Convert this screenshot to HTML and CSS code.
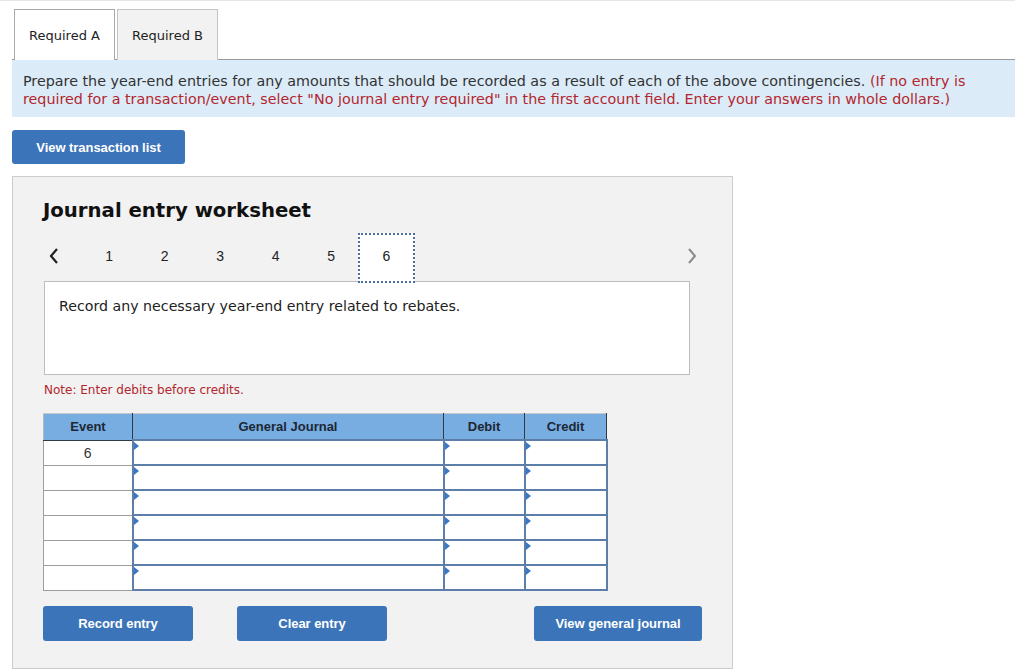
FILE: index.html
```html
<!DOCTYPE html>
<html>
<head>
<meta charset="utf-8">
<link rel="stylesheet" href="styles.css">
</head>
<body>
<div class="page">
  <div class="tabs">
    <div class="tab active">Required A</div>
    <div class="tab">Required B</div>
  </div>
  <div class="instructions">
    Prepare the year-end entries for any amounts that should be recorded as a result of each of the above contingencies. <span class="red">(If no entry is required for a transaction/event, select "No journal entry required" in the first account field. Enter your answers in whole dollars.)</span>
  </div>
  <button class="btn btn-list">View transaction list</button>

  <div class="panel">
    <h2 class="title">Journal entry worksheet</h2>
    <div class="pager">
      <div class="arrow prev">
        <svg width="12" height="18" viewBox="0 0 12 18"><path d="M9 2 L3 9 L9 16" fill="none" stroke="#222" stroke-width="2.2"/></svg>
      </div>
      <div class="num">1</div>
      <div class="num">2</div>
      <div class="num">3</div>
      <div class="num">4</div>
      <div class="num">5</div>
      <div class="num current">6</div>
      <div class="arrow next">
        <svg width="12" height="18" viewBox="0 0 12 18"><path d="M3 2 L9 9 L3 16" fill="none" stroke="#8a8a8a" stroke-width="2"/></svg>
      </div>
    </div>
    <div class="desc">Record any necessary year-end entry related to rebates.</div>
    <div class="note">Note: Enter debits before credits.</div>

    <table class="journal">
      <thead>
        <tr><th class="c-ev">Event</th><th class="c-gj">General Journal</th><th class="c-dr">Debit</th><th class="c-cr">Credit</th></tr>
      </thead>
      <tbody>
        <tr><td class="ev">6</td><td class="in"></td><td class="in"></td><td class="in"></td></tr>
        <tr><td class="ev"></td><td class="in"></td><td class="in"></td><td class="in"></td></tr>
        <tr><td class="ev"></td><td class="in"></td><td class="in"></td><td class="in"></td></tr>
        <tr><td class="ev"></td><td class="in"></td><td class="in"></td><td class="in"></td></tr>
        <tr><td class="ev"></td><td class="in"></td><td class="in"></td><td class="in"></td></tr>
        <tr><td class="ev"></td><td class="in"></td><td class="in"></td><td class="in"></td></tr>
      </tbody>
    </table>

    <div class="actions">
      <button class="btn btn-record">Record entry</button>
      <button class="btn btn-clear">Clear entry</button>
      <button class="btn btn-view">View general journal</button>
    </div>
  </div>
</div>
</body>
</html>
```
FILE: styles.css
```css
html, body {
  margin: 0;
  padding: 0;
  background: #fff;
}
body {
  font-family: "DejaVu Sans", Verdana, sans-serif;
  color: #222;
}
.page {
  width: 1003px;
  padding-left: 12px;
  border-top: 1px solid #e6e6e6;
}
.tabs {
  display: flex;
  padding-top: 8px;
  padding-left: 2px;
  border-bottom: 1px solid #9a9a9a;
  gap: 2px;
}
.tab {
  width: 99px;
  height: 50px;
  border: 1px solid #c4c4c4;
  border-bottom: none;
  background: #f2f2f2;
  font-family: "DejaVu Sans", Verdana, sans-serif;
  font-size: 13px;
  color: #222;
  display: flex;
  align-items: center;
  justify-content: center;
  margin-bottom: -1px;
}
.tab.active {
  background: #fff;
  border-color: #a8a8a8;
}
.instructions {
  background: #dbebf8;
  padding: 12px 11px 9px 11px;
  font-size: 14.3px;
  line-height: 18px;
  color: #333;
}
.red {
  color: #b3262d;
}
.btn {
  background: #3b74b8;
  color: #fff;
  border: none;
  border-radius: 3px;
  font-family: "Liberation Sans", Arial, sans-serif;
  font-weight: bold;
  font-size: 13px;
  letter-spacing: -0.05px;
  padding: 0;
  cursor: pointer;
}
.btn-list {
  display: block;
  margin-top: 13px;
  width: 173px;
  height: 34px;
}
.panel {
  margin-top: 12px;
  width: 719px;
  height: 491px;
  background: #f2f2f2;
  border: 1px solid #cccccc;
  padding: 0;
}
.title {
  margin: 22px 0 0 30px;
  font-size: 19.7px;
  line-height: 24px;
  font-weight: bold;
  color: #111;
}
.pager {
  display: flex;
  align-items: stretch;
  height: 50px;
  margin-top: 10px;
  margin-bottom: -2px;
  position: relative;
  z-index: 1;
  padding-left: 13px;
  font-family: "Liberation Sans", Arial, sans-serif;
  font-size: 14px;
  color: #222;
}
.pager .arrow {
  display: flex;
  align-items: center;
  justify-content: center;
  padding-bottom: 4px;
}
.pager .prev {
  width: 55.5px;
}
.pager .next {
  width: 30px;
  margin-left: auto;
  margin-right: 25px;
}
.pager .num {
  width: 55.5px;
  display: flex;
  align-items: center;
  justify-content: center;
  box-sizing: border-box;
  padding-bottom: 4px;
}
.pager .num.current {
  background: #fff;
  border: 2px dotted #4a6fa0;
  width: 57px;
  margin-left: -1px;
}
.desc {
  margin-left: 31px;
  background: #fff;
  border: 1px solid #bdbdbd;
  padding: 15px 0 0 14px;
  width: 630px;
  height: 77px;
  font-size: 14.2px;
  line-height: 18px;
  color: #222;
}
.note {
  margin: 7px 0 0 31px;
  font-size: 12px;
  line-height: 16px;
  color: #b3262d;
}
.journal {
  margin: 15px 0 0 30px;
  border-collapse: collapse;
  font-family: "Liberation Sans", Arial, sans-serif;
  table-layout: fixed;
  width: 559px;
}
.journal th {
  background: #78ade2;
  color: #1d2733;
  font-size: 13px;
  font-weight: bold;
  height: 25px;
  padding: 0;
  border: 1px solid #2f3a45;
  border-top-color: #c7c7c7;
  text-align: center;
}
.journal th.c-ev { width: 88px; border-left-color: #b9b9b9; }
.journal th.c-gj { width: 310px; }
.journal th.c-dr { width: 80px; }
.journal th.c-cr { width: 81px; }
.journal td {
  padding: 0;
  background: #fff;
}
.journal td.ev {
  border: 1px solid #9d9d9d;
  text-align: center;
  font-size: 14px;
  color: #333;
  vertical-align: top;
  padding-top: 4px;
  height: 19px;
}
.journal td.in {
  border: 2px solid #5d7ea8;
  height: 23px;
  position: relative;
}
.journal td.in::before {
  content: "";
  position: absolute;
  top: 1px;
  left: 0;
  border-left: 5px solid #3a78c6;
  border-top: 4px solid transparent;
  border-bottom: 4px solid transparent;
}
.actions {
  display: flex;
  margin: 15px 0 0 30px;
}
.actions .btn {
  height: 35px;
}
.btn-record { width: 150px; }
.btn-clear { width: 150px; margin-left: 44px; }
.btn-view { width: 168px; margin-left: 147px; }
```
